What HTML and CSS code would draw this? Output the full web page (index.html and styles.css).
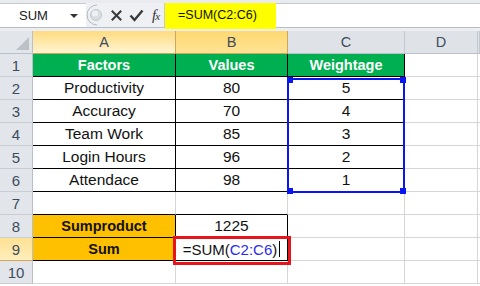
FILE: index.html
```html
<!DOCTYPE html>
<html lang="en">
<head>
    <meta charset="UTF-8">
    <meta name="viewport" content="width=device-width, initial-scale=1.0">
    <title>SUMPRODUCT</title>
    <link rel="stylesheet" href="styles.css">
</head>
<body>

    <div class="ribbon-edge"></div>

    <div class="formula-bar">
        <div class="name-box">
            <span class="name">SUM</span>
            <span class="drop"></span>
        </div>
        <div class="fx-group">
            <svg class="ball" width="16" height="22" viewBox="0 0 16 22">
                <path d="M11 1 A10 10 0 0 0 11 21" fill="none" stroke="#b4bac3" stroke-width="1"/>
                <circle cx="10" cy="11" r="5.5" fill="#d9dce0" stroke="#c3c7cd"/>
                <circle cx="9" cy="9.5" r="3" fill="#eef0f2"/>
            </svg>
            <svg class="icon x" width="11" height="11" viewBox="0 0 11 11">
                <path d="M1.5 1.5 L9.5 9.5 M9.5 1.5 L1.5 9.5" stroke="#3a3a3a" stroke-width="2" stroke-linecap="square"/>
            </svg>
            <svg class="icon check" width="15" height="13" viewBox="0 0 15 13">
                <path d="M1.5 6.5 L5.5 11 L13.5 1.5" fill="none" stroke="#3a3a3a" stroke-width="2.4"/>
            </svg>
            <span class="fx">f<i>x</i></span>
        </div>
        <div class="formula">
            <span class="formula-mark">=SUM(C2:C6)</span>
        </div>
    </div>
    <div class="bar-gap"></div>

    <div class="sheet">
        <div class="corner"><span class="tri"></span></div>
        <div class="col-head sel">A</div>
        <div class="col-head sel active">B</div>
        <div class="col-head">C</div>
        <div class="col-head">D</div>
        <div class="col-head edge"></div>

        <div class="row-head">1</div>
        <div class="cell t-head">Factors</div>
        <div class="cell t-head">Values</div>
        <div class="cell t-head">Weightage</div>
        <div class="cell"></div>
        <div class="cell edge"></div>

        <div class="row-head">2</div>
        <div class="cell t-body">Productivity</div>
        <div class="cell t-body">80</div>
        <div class="cell t-body">5</div>
        <div class="cell"></div>
        <div class="cell edge"></div>

        <div class="row-head">3</div>
        <div class="cell t-body">Accuracy</div>
        <div class="cell t-body">70</div>
        <div class="cell t-body">4</div>
        <div class="cell"></div>
        <div class="cell edge"></div>

        <div class="row-head">4</div>
        <div class="cell t-body">Team Work</div>
        <div class="cell t-body">85</div>
        <div class="cell t-body">3</div>
        <div class="cell"></div>
        <div class="cell edge"></div>

        <div class="row-head">5</div>
        <div class="cell t-body">Login Hours</div>
        <div class="cell t-body">96</div>
        <div class="cell t-body">2</div>
        <div class="cell"></div>
        <div class="cell edge"></div>

        <div class="row-head">6</div>
        <div class="cell t-body">Attendace</div>
        <div class="cell t-body">98</div>
        <div class="cell t-body">1</div>
        <div class="cell"></div>
        <div class="cell edge"></div>

        <div class="row-head">7</div>
        <div class="cell under"></div>
        <div class="cell under"></div>
        <div class="cell"></div>
        <div class="cell"></div>
        <div class="cell edge"></div>

        <div class="row-head">8</div>
        <div class="cell t-label">Sumproduct</div>
        <div class="cell t-body">1225</div>
        <div class="cell"></div>
        <div class="cell"></div>
        <div class="cell edge"></div>

        <div class="row-head sel">9</div>
        <div class="cell t-label">Sum</div>
        <div class="cell t-body editing">=SUM(<span class="ref">C2:C6</span>)<span class="caret"></span></div>
        <div class="cell"></div>
        <div class="cell"></div>
        <div class="cell edge"></div>

        <div class="row-head">10</div>
        <div class="cell"></div>
        <div class="cell"></div>
        <div class="cell"></div>
        <div class="cell"></div>
        <div class="cell edge"></div>

        <!-- range picked by the formula -->
        <div class="range-box">
            <span class="handle tl"></span>
            <span class="handle tr"></span>
            <span class="handle bl"></span>
            <span class="handle br"></span>
        </div>
        <!-- highlight round the edited cell -->
        <div class="edit-box"></div>
    </div>

</body>
</html>
```

FILE: styles.css
```css
* {
    margin: 0;
    padding: 0;
    box-sizing: border-box;
}
body {
    font-family: "Liberation Sans", Arial, sans-serif;
    background-color: white;
    width: 480px;
    height: 286px;
    overflow: hidden;
}
.ribbon-edge {
    height: 4px;
    background-color: #e9ebee;
    border-bottom: 1px solid #c6cbd2;
}
.formula-bar {
    display: flex;
    height: 24px;
    background-color: white;
    border-bottom: 1px solid #b7bdc6;
}
.name-box {
    width: 86px;
    display: flex;
    align-items: center;
    padding-left: 19px;
    padding-right: 8px;
    font-size: 13px;
    color: #1a1a1a;
}
.name-box .name {
    flex: 1;
}
.name-box .drop {
    width: 0;
    height: 0;
    border-left: 4px solid transparent;
    border-right: 4px solid transparent;
    border-top: 4px solid #333;
}
.fx-group {
    width: 78px;
    display: flex;
    align-items: center;
    background-color: #eef0f3;
    margin-top: -1px;
}
.fx-group .x {
    margin-left: 9px;
}
.fx-group .check {
    margin-left: 7px;
}
.fx-group .fx {
    font-family: "Liberation Serif", "Times New Roman", serif;
    font-style: italic;
    font-size: 15px;
    color: #333;
    margin-left: 8px;
    letter-spacing: -1px;
}
.fx-group .fx i {
    font-size: 11px;
}
.formula {
    flex: 1;
    display: flex;
    border-left: 1px solid #c6cbd2;
}
.formula-mark {
    width: 111px;
    height: 26px;
    margin-top: -1px;
    margin-bottom: -2px;
    background-color: #ffff00;
    font-size: 12.5px;
    line-height: 25px;
    padding-left: 13px;
    color: #111;
}
.bar-gap {
    height: 3px;
    background-color: #eceef1;
}
.sheet {
    position: relative;
    display: grid;
    grid-template-columns: 33px 143px 112px 117px 73px 2px;
    grid-auto-rows: 23px;
}
.corner {
    position: relative;
    background-color: #e2e6eb;
    border-right: 1px solid #b9c0c9;
    border-bottom: 1px solid #b9c0c9;
}
.corner .tri {
    position: absolute;
    right: 3px;
    bottom: 3px;
    width: 0;
    height: 0;
    border-left: 13px solid transparent;
    border-bottom: 13px solid #bcc1c7;
}
.col-head {
    background-color: #dfe3e8;
    border-right: 1px solid #c2c8d0;
    border-bottom: 1px solid #b9c0c9;
    color: #3d4b5e;
    font-size: 14.5px;
    display: flex;
    align-items: center;
    justify-content: center;
}
.col-head.sel {
    background: linear-gradient(#fedb7f, #fff4d2);
    border-right-color: #d1a659;
    border-bottom-color: #d1a659;
}
.col-head.sel.active {
    background: linear-gradient(#fed870, #ffe395);
}
.row-head {
    background-color: #e2e6eb;
    border-right: 1px solid #b9c0c9;
    border-bottom: 1px solid #c9ced6;
    color: #3d4b5e;
    font-size: 15px;
    display: flex;
    align-items: center;
    justify-content: center;
}
.row-head.sel {
    background: linear-gradient(#fee294, #ffeebb);
    border-bottom-color: #d1a659;
}
.cell {
    border-right: 1px solid #d6d6d6;
    border-bottom: 1px solid #d6d6d6;
    display: flex;
    align-items: center;
    justify-content: center;
    font-size: 15.5px;
    color: #111;
}
.cell.edge {
    border-right: none;
}
.cell.t-head {
    background-color: #00b050;
    color: white;
    font-weight: bold;
    font-size: 14.5px;
    border-right-color: #000;
    border-bottom-color: #000;
}
.cell.t-body {
    border-right-color: #000;
    border-bottom-color: #000;
}
.cell.under {
    border-bottom-color: #000;
}
.cell.t-label {
    background-color: #ffc000;
    font-weight: bold;
    font-size: 14.5px;
    border-right-color: #000;
    border-bottom-color: #000;
}
.cell.editing {
    font-size: 15px;
}
.cell.editing .ref {
    color: #2a2af0;
}
.cell.editing .caret {
    display: inline-block;
    width: 1px;
    height: 16px;
    margin-left: 2px;
    background-color: #000;
}
.range-box {
    position: absolute;
    left: 287px;
    top: 47px;
    width: 118px;
    height: 115px;
    border: 2px solid #0a16f0;
}
.range-box .handle {
    position: absolute;
    width: 6px;
    height: 6px;
    background-color: #0a16f0;
}
.range-box .tl { left: -2px; top: -3px; }
.range-box .tr { right: -3px; top: -3px; }
.range-box .bl { left: -2px; bottom: -3px; }
.range-box .br { right: -3px; bottom: -3px; }
.edit-box {
    position: absolute;
    left: 173px;
    top: 205px;
    width: 118px;
    height: 29px;
    border: 3px solid #e8141c;
}
```
